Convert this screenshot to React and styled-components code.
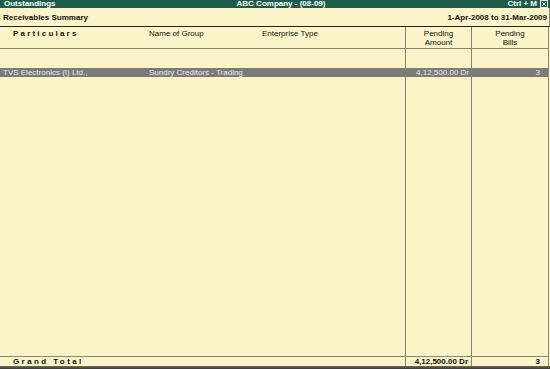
import React from 'react'
import styled, { createGlobalStyle } from 'styled-components'

const Global = createGlobalStyle`
    html, body {
        margin: 0;
        padding: 0;
        height: 369px;
        overflow: hidden;
        background: #fbf4c9;
    }
    #root {
        height: 369px;
    }
`

const Screen = styled.div`
    height: 369px;
    width: 550px;
    display: flex;
    flex-direction: column;
    font-family: 'Liberation Sans', Arial, sans-serif;
    font-size: 8px;
    color: #111;
    background: #fbf4c9;
`

const TitleBar = styled.div`
    height: 8px;
    flex: none;
    display: grid;
    grid-template-columns: 1fr auto 1fr;
    align-items: center;
    padding: 0 2px 0 4px;
    background: #1d5c48;
    color: #fff;
    font-weight: bold;
    line-height: 8px;
`

const TitleCenter = styled.div`
    padding-left: 10px;
`

const TitleRight = styled.div`
    display: flex;
    justify-content: flex-end;
    align-items: center;
    gap: 3px;
`

const SubHeader = styled.div`
    height: 18px;
    flex: none;
    display: flex;
    justify-content: space-between;
    align-items: center;
    padding: 0 2px 0 3px;
    font-weight: bold;
    border-bottom: 1px solid #222;
    border-right: 1px solid #8a8670;
    width: 544px;
`

const Table = styled.div`
    flex: 1;
    display: flex;
    flex-direction: column;
    width: 548px;
    border-right: 1px solid #8a8670;
`

const Row = styled.div`
    display: grid;
    grid-template-columns: 146px 113px 146px 66px 1fr;
    flex: ${p => (p.$fill ? 1 : 'none')};
    background: ${p => (p.$selected ? '#7b7b79' : 'transparent')};
    color: ${p => (p.$selected ? '#ececec' : '#111')};
    font-weight: ${p => (p.$bold ? 'bold' : 'normal')};
    border-top: ${p => (p.$lineTop ? '1px solid #8a8670' : 'none')};
    border-bottom: ${p => (p.$lineBottom ? '1px solid #8a8670' : 'none')};
`

const Cell = styled.div`
    padding: ${p => p.$pad || '0'};
    text-align: ${p => p.$align || 'left'};
    border-left: ${p => (p.$divider ? '1px solid #86826c' : 'none')};
    line-height: ${p => p.$lh || '9px'};
    white-space: nowrap;
`

const Spaced = styled.span`
    font-weight: bold;
    letter-spacing: ${p => p.$ls};
`

const Footer = styled.div`
    height: 3px;
    flex: none;
    background: linear-gradient(#6a6a60, #3a3a36);
`

function CloseBox() {
    return (
        <svg width="8" height="8" viewBox="0 0 8 8">
            <rect x="0.5" y="0.5" width="7" height="7" fill="#1d5c48" stroke="#e8e8e8" />
            <path d="M2 2 L6 6 M6 2 L2 6" stroke="#e8e8e8" strokeWidth="1" />
        </svg>
    )
}

export default function App() {
    return (
        <>
            <Global />
            <Screen>
                <TitleBar>
                    <div>Outstandings</div>
                    <TitleCenter>ABC Company - (08-09)</TitleCenter>
                    <TitleRight>
                        <span>Ctrl + M</span>
                        <CloseBox />
                    </TitleRight>
                </TitleBar>
                <SubHeader>
                    <span>Receivables Summary</span>
                    <span>1-Apr-2008 to 31-Mar-2009</span>
                </SubHeader>
                <Table>
                    <Row $lineBottom>
                        <Cell $pad="2px 0 0 13px" $lh="9px">
                            <Spaced $ls="2.2px">Particulars</Spaced>
                        </Cell>
                        <Cell $pad="2px 0 0 3px">Name of Group</Cell>
                        <Cell $pad="2px 0 0 3px">Enterprise Type</Cell>
                        <Cell $divider $align="center" $pad="2px 0 1px">
                            Pending
                            <br />
                            Amount
                        </Cell>
                        <Cell $divider $align="center" $pad="2px 0 1px">
                            Pending
                            <br />
                            Bills
                        </Cell>
                    </Row>
                    <Row>
                        <Cell $lh="19px">&nbsp;</Cell>
                        <Cell />
                        <Cell />
                        <Cell $divider />
                        <Cell $divider />
                    </Row>
                    <Row $selected>
                        <Cell $pad="0 0 0 3px">TVS Electronics (I) Ltd.,</Cell>
                        <Cell $pad="0 0 0 3px">Sundry Creditors - Trading</Cell>
                        <Cell />
                        <Cell $divider $align="right" $pad="0 2px 0 0">
                            4,12,500.00 Dr
                        </Cell>
                        <Cell $divider $align="right" $pad="0 8px 0 0">
                            3
                        </Cell>
                    </Row>
                    <Row $fill>
                        <Cell />
                        <Cell />
                        <Cell />
                        <Cell $divider />
                        <Cell $divider />
                    </Row>
                    <Row $bold $lineTop>
                        <Cell $pad="0 0 0 13px">
                            <Spaced $ls="2.4px">Grand Total</Spaced>
                        </Cell>
                        <Cell />
                        <Cell />
                        <Cell $divider $align="right" $pad="0 3px 0 0">
                            4,12,500.00 Dr
                        </Cell>
                        <Cell $divider $align="right" $pad="0 8px 0 0">
                            3
                        </Cell>
                    </Row>
                </Table>
                <Footer />
            </Screen>
        </>
    )
}
